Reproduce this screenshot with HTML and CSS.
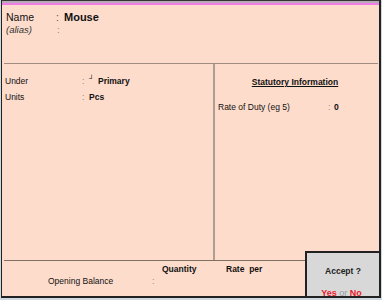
FILE: index.html
```html
<!DOCTYPE html>
<html lang="en">
<head>
  <meta charset="UTF-8">
  <title>Stock Item Alteration</title>
  <link rel="stylesheet" href="styles.css">
</head>
<body>
  <div class="frame">
    <div class="topbar"></div>

    <div class="head">
      <div class="row name-row">
        <span class="lbl">Name</span>
        <span class="colon">:</span>
        <span class="val big">Mouse</span>
      </div>
      <div class="row alias-row">
        <span class="lbl"><i>(alias)</i></span>
        <span class="colon">:</span>
      </div>
    </div>

    <div class="middle">
      <div class="left">
        <div class="row field">
          <span class="lbl">Under</span>
          <span class="colon">:</span>
          <span class="val"><span class="tick">&#x2518;</span>Primary</span>
        </div>
        <div class="row field">
          <span class="lbl">Units</span>
          <span class="colon">:</span>
          <span class="val">Pcs</span>
        </div>
      </div>
      <div class="right">
        <div class="stat-title">Statutory Information</div>
        <div class="row duty">
          <span class="lbl">Rate of Duty (eg 5)</span>
          <span class="colon">:</span>
          <span class="val">0</span>
        </div>
      </div>
    </div>

    <div class="bottom">
      <div class="cols">
        <span class="col-qty">Quantity</span>
        <span class="col-rate">Rate&nbsp; per</span>
      </div>
      <div class="row opening">
        <span class="lbl">Opening Balance</span>
        <span class="colon">:</span>
      </div>
    </div>

    <div class="accept">
      <div class="accept-title">Accept ?</div>
      <div class="accept-opts"><span class="red">Yes</span> <span class="or">or</span> <span class="red">No</span></div>
    </div>
  </div>
</body>
</html>
```

FILE: styles.css
```css
body {
  margin: 0;
  background-color: #d0d8e0;
  font-family: "Liberation Sans", Arial, sans-serif;
  color: #111;
}
.frame {
  position: relative;
  box-sizing: border-box;
  margin-left: 1px;
  width: 380px;
  height: 298px;
  background-color: #fedccc;
  border-left: 1px solid #222;
  border-top: 1px solid #333;
  border-right: 2px solid #222;
  border-bottom: 2px solid #222;
  display: flex;
  flex-direction: column;
}
.topbar {
  height: 2px;
  background-color: #b8a8b8;
  border-bottom: 2px solid #f07ce8;
}
.row {
  display: flex;
  align-items: baseline;
}
.colon {
  color: #888;
}

/* name section */
.head {
  height: 59px;
  margin: 0 1px 0 2px;
  padding: 6px 0 0 2px;
  box-sizing: border-box;
  border-bottom: 1px solid #a08c80;
}
.name-row {
  font-size: 10.5px;
  height: 13px;
}
.name-row .lbl {
  width: 50px;
}
.name-row .colon {
  width: 8px;
  color: #555;
}
.big {
  font-weight: bold;
  font-size: 11px;
}
.alias-row {
  font-size: 9.5px;
  color: #333;
}
.alias-row .lbl {
  width: 51px;
}

/* middle section */
.middle {
  height: 196px;
  display: flex;
  margin: 0 1px 0 2px;
}
.left {
  box-sizing: border-box;
  width: 209px;
  padding: 12px 0 0 1px;
  font-size: 8.5px;
}
.field {
  height: 16px;
}
.field .lbl {
  width: 77px;
}
.field .colon {
  width: 7px;
}
.field .val {
  font-weight: bold;
}
.tick {
  font-weight: normal;
  font-size: 7px;
  position: relative;
  top: -3px;
  margin-right: 4px;
}
.right {
  flex: 1;
  border-left: 2px solid #b09c90;
  font-size: 8.5px;
  padding: 13px 0 0 3px;
}
.stat-title {
  text-align: center;
  font-weight: bold;
  text-decoration: underline;
  margin-bottom: 15px;
  padding-right: 6px;
}
.duty .lbl {
  width: 110px;
}
.duty .colon {
  width: 6px;
}
.duty .val {
  font-weight: bold;
}

/* bottom section */
.bottom {
  flex: 1;
  margin: 0 1px 0 2px;
  border-top: 1px solid #807068;
  font-size: 8.5px;
  padding-top: 3px;
}
.cols {
  font-weight: bold;
  display: flex;
  height: 12px;
}
.col-qty {
  margin-left: 158px;
  width: 64px;
}
.opening {
  padding-left: 44px;
}
.opening .lbl {
  width: 104px;
}

/* accept box */
.accept {
  position: absolute;
  right: 0;
  bottom: 0;
  width: 72px;
  height: 43px;
  background-color: #d8d8d8;
  border-top: 2px solid #222;
  border-left: 2px solid #222;
  text-align: center;
  font-size: 8.5px;
}
.accept-title {
  font-weight: bold;
  margin-top: 13px;
  color: #222;
}
.accept-opts {
  margin-top: 12px;
  padding-right: 3px;
  font-size: 9px;
}
.red {
  color: #e8202a;
  font-weight: bold;
}
.or {
  color: #999;
}
```
